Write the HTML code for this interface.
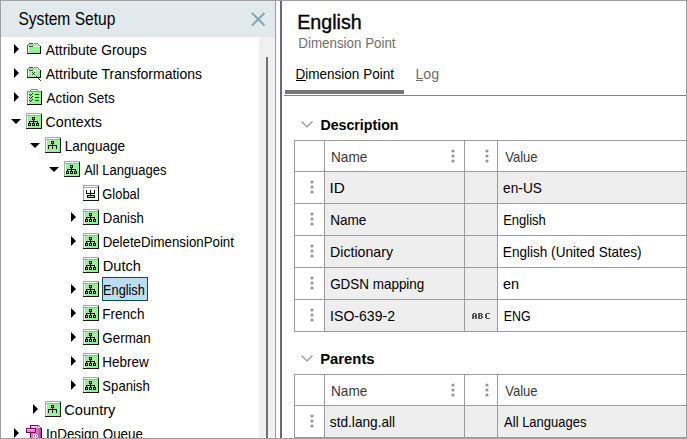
<!DOCTYPE html>
<html><head><meta charset="utf-8">
<style>
html,body{margin:0;padding:0;width:687px;height:439px;overflow:hidden;background:#fff;}
body{position:relative;font-family:"Liberation Sans",sans-serif;color:#000;}
.ab{position:absolute;display:block;}
.gl{background:#9c9c9c;}
</style></head><body>
<div class="ab" style="left:1px;top:1px;width:274px;height:36px;background:#e1e9ec"></div>
<svg class="ab" style="left:250px;top:11px" width="16" height="16"><path d="M2 2L14.5 14.5M14.5 2L2 14.5" stroke="#7ea8b2" stroke-width="2"/></svg>
<div class="ab" style="left:259px;top:37px;width:16px;height:402px;background:#f0f0f0"></div>
<div class="ab" style="left:266px;top:57px;width:2px;height:382px;background:#707070"></div>
<div class="ab" style="left:275px;top:0px;width:1px;height:439px;background:#7ea8b2"></div>
<div class="ab" style="left:280px;top:0px;width:2px;height:439px;background:#6a6a6a"></div>
<svg class="ab" style="left:14px;top:44px" width="5" height="10"><path d="M0 0L5 5L0 10Z" fill="#000"/></svg>
<svg class="ab" style="left:26px;top:41px" width="16" height="16" shape-rendering="crispEdges"><rect x="3" y="2" width="4" height="1" fill="#505050"/><rect x="8" y="2" width="4" height="1" fill="#8a8a8a"/><rect x="2" y="3" width="1" height="1" fill="#707070"/><rect x="3" y="3" width="4" height="2" fill="#90e890"/><rect x="7" y="3" width="1" height="1" fill="#909090"/><rect x="8" y="3" width="4" height="1" fill="#c0f8c0"/><rect x="12" y="3" width="1" height="1" fill="#909090"/><rect x="1" y="4" width="1" height="1" fill="#707070"/><rect x="2" y="4" width="1" height="1" fill="#a0c8a0"/><rect x="7" y="4" width="6" height="1" fill="#b8d8b8"/><rect x="13" y="4" width="1" height="1" fill="#909090"/><rect x="1" y="5" width="1" height="8" fill="#606060"/><rect x="2" y="5" width="1" height="7" fill="#d8ffd8"/><rect x="3" y="5" width="4" height="1" fill="#505050"/><rect x="7" y="5" width="7" height="1" fill="#d0ffd0"/><rect x="14" y="5" width="1" height="8" fill="#111"/><rect x="3" y="6" width="11" height="6" fill="#98f098"/><rect x="1" y="12" width="14" height="1" fill="#111"/></svg>
<svg class="ab" style="left:14px;top:68px" width="5" height="10"><path d="M0 0L5 5L0 10Z" fill="#000"/></svg>
<svg class="ab" style="left:26px;top:65px" width="16" height="16" shape-rendering="crispEdges"><rect x="3" y="2" width="4" height="1" fill="#505050"/><rect x="8" y="2" width="4" height="1" fill="#8a8a8a"/><rect x="2" y="3" width="1" height="1" fill="#707070"/><rect x="3" y="3" width="4" height="2" fill="#90e890"/><rect x="7" y="3" width="1" height="1" fill="#909090"/><rect x="8" y="3" width="4" height="1" fill="#c0f8c0"/><rect x="12" y="3" width="1" height="1" fill="#909090"/><rect x="1" y="4" width="1" height="1" fill="#707070"/><rect x="2" y="4" width="1" height="1" fill="#a0c8a0"/><rect x="7" y="4" width="6" height="1" fill="#b8d8b8"/><rect x="13" y="4" width="1" height="1" fill="#909090"/><rect x="1" y="5" width="1" height="8" fill="#606060"/><rect x="2" y="5" width="1" height="7" fill="#d8ffd8"/><rect x="3" y="5" width="4" height="1" fill="#505050"/><rect x="7" y="5" width="7" height="1" fill="#d0ffd0"/><rect x="14" y="5" width="1" height="8" fill="#111"/><rect x="3" y="6" width="11" height="6" fill="#98f098"/><rect x="1" y="12" width="14" height="1" fill="#111"/><rect x="7" y="8" width="1" height="1" fill="#111"/><rect x="6" y="7" width="1" height="1" fill="#555"/><rect x="8" y="7" width="1" height="1" fill="#555"/><rect x="6" y="9" width="1" height="1" fill="#555"/><rect x="8" y="9" width="1" height="1" fill="#555"/><rect x="5" y="6" width="1" height="1" fill="#f0f0f0"/><rect x="9" y="6" width="1" height="1" fill="#f0f0f0"/><rect x="7" y="6" width="1" height="1" fill="#d0d0d0"/><rect x="4" y="8" width="2" height="1" fill="#f0f0f0"/><rect x="9" y="8" width="2" height="1" fill="#f0f0f0"/><rect x="5" y="10" width="1" height="1" fill="#f0f0f0"/><rect x="9" y="10" width="1" height="1" fill="#d0d0d0"/><rect x="7" y="10" width="1" height="1" fill="#d0d0d0"/><rect x="10" y="11" width="1" height="1" fill="#222"/><rect x="11" y="12" width="1" height="1" fill="#222"/><rect x="12" y="13" width="1" height="1" fill="#222"/><rect x="13" y="14" width="1" height="1" fill="#222"/><rect x="14" y="15" width="1" height="1" fill="#444"/></svg>
<svg class="ab" style="left:14px;top:92px" width="5" height="10"><path d="M0 0L5 5L0 10Z" fill="#000"/></svg>
<svg class="ab" style="left:26px;top:89px" width="16" height="16" shape-rendering="crispEdges"><rect x="1" y="2" width="15" height="14" fill="#909090"/><rect x="2" y="3" width="13" height="12" fill="#98f098"/><rect x="2" y="3" width="1" height="12" fill="#f4fff4"/><rect x="15" y="2" width="1" height="14" fill="#111"/><rect x="1" y="15" width="15" height="1" fill="#111"/><rect x="4" y="0" width="8" height="3" fill="#8a8a8a"/><rect x="5" y="1" width="6" height="1" fill="#fff"/><rect x="4" y="0" width="1" height="1" fill="#c8c8c8"/><rect x="11" y="0" width="1" height="1" fill="#c8c8c8"/><rect x="3" y="5" width="1" height="1" fill="#0a2a0a"/><rect x="4" y="6" width="1" height="1" fill="#0a2a0a"/><rect x="5" y="5" width="1" height="1" fill="#0a2a0a"/><rect x="6" y="4" width="1" height="1" fill="#0a2a0a"/><rect x="9" y="5" width="4" height="1" fill="#0a6a0a"/><rect x="3" y="8" width="1" height="1" fill="#0a2a0a"/><rect x="4" y="9" width="1" height="1" fill="#0a2a0a"/><rect x="5" y="8" width="1" height="1" fill="#0a2a0a"/><rect x="6" y="7" width="1" height="1" fill="#0a2a0a"/><rect x="9" y="8" width="4" height="1" fill="#0a6a0a"/><rect x="3" y="11" width="1" height="1" fill="#0a2a0a"/><rect x="4" y="12" width="1" height="1" fill="#0a2a0a"/><rect x="5" y="11" width="1" height="1" fill="#0a2a0a"/><rect x="6" y="10" width="1" height="1" fill="#0a2a0a"/><rect x="9" y="11" width="4" height="1" fill="#0a6a0a"/></svg>
<svg class="ab" style="left:11px;top:119px" width="10" height="5"><path d="M0 0L10 0L5 5Z" fill="#000"/></svg>
<svg class="ab" style="left:26px;top:113px" width="16" height="16" shape-rendering="crispEdges"><rect x="0" y="0" width="16" height="16" fill="#a8a8a8"/><rect x="1" y="1" width="14" height="1" fill="#fff"/><rect x="1" y="3" width="14" height="12" fill="#98f098"/><rect x="15" y="1" width="1" height="15" fill="#1a1a1a"/><rect x="0" y="15" width="16" height="1" fill="#1a1a1a"/><rect x="1" y="3" width="1" height="12" fill="#e8ffe8"/><rect x="6" y="4" width="3" height="3" fill="#111"/><rect x="7" y="5" width="1" height="1" fill="#ddd"/><rect x="7" y="7" width="1" height="1" fill="#111"/><rect x="3" y="8" width="9" height="1" fill="#111"/><rect x="3" y="9" width="1" height="1" fill="#111"/><rect x="7" y="9" width="1" height="1" fill="#111"/><rect x="11" y="9" width="1" height="1" fill="#111"/><rect x="2" y="10" width="3" height="3" fill="#111"/><rect x="3" y="11" width="1" height="1" fill="#ddd"/><rect x="6" y="10" width="3" height="3" fill="#111"/><rect x="7" y="11" width="1" height="1" fill="#ddd"/><rect x="10" y="10" width="3" height="3" fill="#111"/><rect x="11" y="11" width="1" height="1" fill="#ddd"/></svg>
<svg class="ab" style="left:30px;top:143px" width="10" height="5"><path d="M0 0L10 0L5 5Z" fill="#000"/></svg>
<svg class="ab" style="left:45px;top:137px" width="16" height="16" shape-rendering="crispEdges"><rect x="0" y="0" width="16" height="16" fill="#a8a8a8"/><rect x="1" y="1" width="14" height="1" fill="#fff"/><rect x="1" y="3" width="14" height="12" fill="#98f098"/><rect x="15" y="1" width="1" height="15" fill="#1a1a1a"/><rect x="0" y="15" width="16" height="1" fill="#1a1a1a"/><rect x="1" y="3" width="1" height="12" fill="#e8ffe8"/><rect x="6" y="4" width="3" height="3" fill="#111"/><rect x="7" y="5" width="1" height="1" fill="#ddd"/><rect x="7" y="7" width="1" height="1" fill="#111"/><rect x="3" y="8" width="9" height="1" fill="#111"/><rect x="3" y="9" width="1" height="3" fill="#111"/><rect x="7" y="9" width="1" height="3" fill="#111"/><rect x="11" y="9" width="1" height="3" fill="#111"/></svg>
<svg class="ab" style="left:49px;top:167px" width="10" height="5"><path d="M0 0L10 0L5 5Z" fill="#000"/></svg>
<svg class="ab" style="left:64px;top:161px" width="16" height="16" shape-rendering="crispEdges"><rect x="0" y="0" width="16" height="16" fill="#a8a8a8"/><rect x="1" y="1" width="14" height="1" fill="#fff"/><rect x="1" y="3" width="14" height="12" fill="#98f098"/><rect x="15" y="1" width="1" height="15" fill="#1a1a1a"/><rect x="0" y="15" width="16" height="1" fill="#1a1a1a"/><rect x="1" y="3" width="1" height="12" fill="#e8ffe8"/><rect x="6" y="4" width="3" height="3" fill="#111"/><rect x="7" y="5" width="1" height="1" fill="#ddd"/><rect x="7" y="7" width="1" height="1" fill="#111"/><rect x="3" y="8" width="9" height="1" fill="#111"/><rect x="3" y="9" width="1" height="1" fill="#111"/><rect x="7" y="9" width="1" height="1" fill="#111"/><rect x="11" y="9" width="1" height="1" fill="#111"/><rect x="2" y="10" width="3" height="3" fill="#111"/><rect x="3" y="11" width="1" height="1" fill="#ddd"/><rect x="6" y="10" width="3" height="3" fill="#111"/><rect x="7" y="11" width="1" height="1" fill="#ddd"/><rect x="10" y="10" width="3" height="3" fill="#111"/><rect x="11" y="11" width="1" height="1" fill="#ddd"/></svg>
<svg class="ab" style="left:83px;top:185px" width="16" height="16" shape-rendering="crispEdges"><rect x="0" y="0" width="16" height="16" fill="#a8a8a8"/><rect x="1" y="1" width="14" height="1" fill="#fff"/><rect x="1" y="3" width="14" height="12" fill="#fff"/><rect x="15" y="1" width="1" height="15" fill="#1a1a1a"/><rect x="0" y="15" width="16" height="1" fill="#1a1a1a"/><rect x="3" y="5" width="1" height="3" fill="#111"/><rect x="7" y="5" width="1" height="3" fill="#111"/><rect x="11" y="5" width="1" height="3" fill="#111"/><rect x="3" y="8" width="9" height="1" fill="#111"/><rect x="7" y="9" width="1" height="1" fill="#111"/><rect x="4" y="10" width="8" height="3" fill="#111"/><rect x="5" y="11" width="6" height="1" fill="#7ee87e"/></svg>
<svg class="ab" style="left:71px;top:212px" width="5" height="10"><path d="M0 0L5 5L0 10Z" fill="#000"/></svg>
<svg class="ab" style="left:83px;top:209px" width="16" height="16" shape-rendering="crispEdges"><rect x="0" y="0" width="16" height="16" fill="#a8a8a8"/><rect x="1" y="1" width="14" height="1" fill="#fff"/><rect x="1" y="3" width="14" height="12" fill="#98f098"/><rect x="15" y="1" width="1" height="15" fill="#1a1a1a"/><rect x="0" y="15" width="16" height="1" fill="#1a1a1a"/><rect x="1" y="3" width="1" height="12" fill="#e8ffe8"/><rect x="6" y="4" width="3" height="3" fill="#111"/><rect x="7" y="5" width="1" height="1" fill="#ddd"/><rect x="7" y="7" width="1" height="1" fill="#111"/><rect x="3" y="8" width="9" height="1" fill="#111"/><rect x="3" y="9" width="1" height="1" fill="#111"/><rect x="7" y="9" width="1" height="1" fill="#111"/><rect x="11" y="9" width="1" height="1" fill="#111"/><rect x="2" y="10" width="3" height="3" fill="#111"/><rect x="3" y="11" width="1" height="1" fill="#ddd"/><rect x="6" y="10" width="3" height="3" fill="#111"/><rect x="7" y="11" width="1" height="1" fill="#ddd"/><rect x="10" y="10" width="3" height="3" fill="#111"/><rect x="11" y="11" width="1" height="1" fill="#ddd"/></svg>
<svg class="ab" style="left:71px;top:236px" width="5" height="10"><path d="M0 0L5 5L0 10Z" fill="#000"/></svg>
<svg class="ab" style="left:83px;top:233px" width="16" height="16" shape-rendering="crispEdges"><rect x="0" y="0" width="16" height="16" fill="#a8a8a8"/><rect x="1" y="1" width="14" height="1" fill="#fff"/><rect x="1" y="3" width="14" height="12" fill="#98f098"/><rect x="15" y="1" width="1" height="15" fill="#1a1a1a"/><rect x="0" y="15" width="16" height="1" fill="#1a1a1a"/><rect x="1" y="3" width="1" height="12" fill="#e8ffe8"/><rect x="6" y="4" width="3" height="3" fill="#111"/><rect x="7" y="5" width="1" height="1" fill="#ddd"/><rect x="7" y="7" width="1" height="1" fill="#111"/><rect x="3" y="8" width="9" height="1" fill="#111"/><rect x="3" y="9" width="1" height="1" fill="#111"/><rect x="7" y="9" width="1" height="1" fill="#111"/><rect x="11" y="9" width="1" height="1" fill="#111"/><rect x="2" y="10" width="3" height="3" fill="#111"/><rect x="3" y="11" width="1" height="1" fill="#ddd"/><rect x="6" y="10" width="3" height="3" fill="#111"/><rect x="7" y="11" width="1" height="1" fill="#ddd"/><rect x="10" y="10" width="3" height="3" fill="#111"/><rect x="11" y="11" width="1" height="1" fill="#ddd"/></svg>
<svg class="ab" style="left:83px;top:257px" width="16" height="16" shape-rendering="crispEdges"><rect x="0" y="0" width="16" height="16" fill="#a8a8a8"/><rect x="1" y="1" width="14" height="1" fill="#fff"/><rect x="1" y="3" width="14" height="12" fill="#98f098"/><rect x="15" y="1" width="1" height="15" fill="#1a1a1a"/><rect x="0" y="15" width="16" height="1" fill="#1a1a1a"/><rect x="1" y="3" width="1" height="12" fill="#e8ffe8"/><rect x="6" y="4" width="3" height="3" fill="#111"/><rect x="7" y="5" width="1" height="1" fill="#ddd"/><rect x="7" y="7" width="1" height="1" fill="#111"/><rect x="3" y="8" width="9" height="1" fill="#111"/><rect x="3" y="9" width="1" height="1" fill="#111"/><rect x="7" y="9" width="1" height="1" fill="#111"/><rect x="11" y="9" width="1" height="1" fill="#111"/><rect x="2" y="10" width="3" height="3" fill="#111"/><rect x="3" y="11" width="1" height="1" fill="#ddd"/><rect x="6" y="10" width="3" height="3" fill="#111"/><rect x="7" y="11" width="1" height="1" fill="#ddd"/><rect x="10" y="10" width="3" height="3" fill="#111"/><rect x="11" y="11" width="1" height="1" fill="#ddd"/></svg>
<svg class="ab" style="left:71px;top:284px" width="5" height="10"><path d="M0 0L5 5L0 10Z" fill="#000"/></svg>
<svg class="ab" style="left:83px;top:281px" width="16" height="16" shape-rendering="crispEdges"><rect x="0" y="0" width="16" height="16" fill="#a8a8a8"/><rect x="1" y="1" width="14" height="1" fill="#fff"/><rect x="1" y="3" width="14" height="12" fill="#98f098"/><rect x="15" y="1" width="1" height="15" fill="#1a1a1a"/><rect x="0" y="15" width="16" height="1" fill="#1a1a1a"/><rect x="1" y="3" width="1" height="12" fill="#e8ffe8"/><rect x="6" y="4" width="3" height="3" fill="#111"/><rect x="7" y="5" width="1" height="1" fill="#ddd"/><rect x="7" y="7" width="1" height="1" fill="#111"/><rect x="3" y="8" width="9" height="1" fill="#111"/><rect x="3" y="9" width="1" height="1" fill="#111"/><rect x="7" y="9" width="1" height="1" fill="#111"/><rect x="11" y="9" width="1" height="1" fill="#111"/><rect x="2" y="10" width="3" height="3" fill="#111"/><rect x="3" y="11" width="1" height="1" fill="#ddd"/><rect x="6" y="10" width="3" height="3" fill="#111"/><rect x="7" y="11" width="1" height="1" fill="#ddd"/><rect x="10" y="10" width="3" height="3" fill="#111"/><rect x="11" y="11" width="1" height="1" fill="#ddd"/></svg>
<svg class="ab" style="left:102px;top:277px" width="46" height="24" shape-rendering="crispEdges"><rect x="0" y="0" width="46" height="24" fill="#bcdcf0"/><rect x="0.5" y="0.5" width="45" height="23" fill="none" stroke="#1e5a6a" stroke-width="1"/><rect x="0.5" y="0.5" width="45" height="23" fill="none" stroke="#4a1e0e" stroke-width="1" stroke-dasharray="1 1"/></svg>
<svg class="ab" style="left:71px;top:308px" width="5" height="10"><path d="M0 0L5 5L0 10Z" fill="#000"/></svg>
<svg class="ab" style="left:83px;top:305px" width="16" height="16" shape-rendering="crispEdges"><rect x="0" y="0" width="16" height="16" fill="#a8a8a8"/><rect x="1" y="1" width="14" height="1" fill="#fff"/><rect x="1" y="3" width="14" height="12" fill="#98f098"/><rect x="15" y="1" width="1" height="15" fill="#1a1a1a"/><rect x="0" y="15" width="16" height="1" fill="#1a1a1a"/><rect x="1" y="3" width="1" height="12" fill="#e8ffe8"/><rect x="6" y="4" width="3" height="3" fill="#111"/><rect x="7" y="5" width="1" height="1" fill="#ddd"/><rect x="7" y="7" width="1" height="1" fill="#111"/><rect x="3" y="8" width="9" height="1" fill="#111"/><rect x="3" y="9" width="1" height="1" fill="#111"/><rect x="7" y="9" width="1" height="1" fill="#111"/><rect x="11" y="9" width="1" height="1" fill="#111"/><rect x="2" y="10" width="3" height="3" fill="#111"/><rect x="3" y="11" width="1" height="1" fill="#ddd"/><rect x="6" y="10" width="3" height="3" fill="#111"/><rect x="7" y="11" width="1" height="1" fill="#ddd"/><rect x="10" y="10" width="3" height="3" fill="#111"/><rect x="11" y="11" width="1" height="1" fill="#ddd"/></svg>
<svg class="ab" style="left:71px;top:332px" width="5" height="10"><path d="M0 0L5 5L0 10Z" fill="#000"/></svg>
<svg class="ab" style="left:83px;top:329px" width="16" height="16" shape-rendering="crispEdges"><rect x="0" y="0" width="16" height="16" fill="#a8a8a8"/><rect x="1" y="1" width="14" height="1" fill="#fff"/><rect x="1" y="3" width="14" height="12" fill="#98f098"/><rect x="15" y="1" width="1" height="15" fill="#1a1a1a"/><rect x="0" y="15" width="16" height="1" fill="#1a1a1a"/><rect x="1" y="3" width="1" height="12" fill="#e8ffe8"/><rect x="6" y="4" width="3" height="3" fill="#111"/><rect x="7" y="5" width="1" height="1" fill="#ddd"/><rect x="7" y="7" width="1" height="1" fill="#111"/><rect x="3" y="8" width="9" height="1" fill="#111"/><rect x="3" y="9" width="1" height="1" fill="#111"/><rect x="7" y="9" width="1" height="1" fill="#111"/><rect x="11" y="9" width="1" height="1" fill="#111"/><rect x="2" y="10" width="3" height="3" fill="#111"/><rect x="3" y="11" width="1" height="1" fill="#ddd"/><rect x="6" y="10" width="3" height="3" fill="#111"/><rect x="7" y="11" width="1" height="1" fill="#ddd"/><rect x="10" y="10" width="3" height="3" fill="#111"/><rect x="11" y="11" width="1" height="1" fill="#ddd"/></svg>
<svg class="ab" style="left:71px;top:356px" width="5" height="10"><path d="M0 0L5 5L0 10Z" fill="#000"/></svg>
<svg class="ab" style="left:83px;top:353px" width="16" height="16" shape-rendering="crispEdges"><rect x="0" y="0" width="16" height="16" fill="#a8a8a8"/><rect x="1" y="1" width="14" height="1" fill="#fff"/><rect x="1" y="3" width="14" height="12" fill="#98f098"/><rect x="15" y="1" width="1" height="15" fill="#1a1a1a"/><rect x="0" y="15" width="16" height="1" fill="#1a1a1a"/><rect x="1" y="3" width="1" height="12" fill="#e8ffe8"/><rect x="6" y="4" width="3" height="3" fill="#111"/><rect x="7" y="5" width="1" height="1" fill="#ddd"/><rect x="7" y="7" width="1" height="1" fill="#111"/><rect x="3" y="8" width="9" height="1" fill="#111"/><rect x="3" y="9" width="1" height="1" fill="#111"/><rect x="7" y="9" width="1" height="1" fill="#111"/><rect x="11" y="9" width="1" height="1" fill="#111"/><rect x="2" y="10" width="3" height="3" fill="#111"/><rect x="3" y="11" width="1" height="1" fill="#ddd"/><rect x="6" y="10" width="3" height="3" fill="#111"/><rect x="7" y="11" width="1" height="1" fill="#ddd"/><rect x="10" y="10" width="3" height="3" fill="#111"/><rect x="11" y="11" width="1" height="1" fill="#ddd"/></svg>
<svg class="ab" style="left:71px;top:380px" width="5" height="10"><path d="M0 0L5 5L0 10Z" fill="#000"/></svg>
<svg class="ab" style="left:83px;top:377px" width="16" height="16" shape-rendering="crispEdges"><rect x="0" y="0" width="16" height="16" fill="#a8a8a8"/><rect x="1" y="1" width="14" height="1" fill="#fff"/><rect x="1" y="3" width="14" height="12" fill="#98f098"/><rect x="15" y="1" width="1" height="15" fill="#1a1a1a"/><rect x="0" y="15" width="16" height="1" fill="#1a1a1a"/><rect x="1" y="3" width="1" height="12" fill="#e8ffe8"/><rect x="6" y="4" width="3" height="3" fill="#111"/><rect x="7" y="5" width="1" height="1" fill="#ddd"/><rect x="7" y="7" width="1" height="1" fill="#111"/><rect x="3" y="8" width="9" height="1" fill="#111"/><rect x="3" y="9" width="1" height="1" fill="#111"/><rect x="7" y="9" width="1" height="1" fill="#111"/><rect x="11" y="9" width="1" height="1" fill="#111"/><rect x="2" y="10" width="3" height="3" fill="#111"/><rect x="3" y="11" width="1" height="1" fill="#ddd"/><rect x="6" y="10" width="3" height="3" fill="#111"/><rect x="7" y="11" width="1" height="1" fill="#ddd"/><rect x="10" y="10" width="3" height="3" fill="#111"/><rect x="11" y="11" width="1" height="1" fill="#ddd"/></svg>
<svg class="ab" style="left:33px;top:404px" width="5" height="10"><path d="M0 0L5 5L0 10Z" fill="#000"/></svg>
<svg class="ab" style="left:45px;top:401px" width="16" height="16" shape-rendering="crispEdges"><rect x="0" y="0" width="16" height="16" fill="#a8a8a8"/><rect x="1" y="1" width="14" height="1" fill="#fff"/><rect x="1" y="3" width="14" height="12" fill="#98f098"/><rect x="15" y="1" width="1" height="15" fill="#1a1a1a"/><rect x="0" y="15" width="16" height="1" fill="#1a1a1a"/><rect x="1" y="3" width="1" height="12" fill="#e8ffe8"/><rect x="6" y="4" width="3" height="3" fill="#111"/><rect x="7" y="5" width="1" height="1" fill="#ddd"/><rect x="7" y="7" width="1" height="1" fill="#111"/><rect x="3" y="8" width="9" height="1" fill="#111"/><rect x="3" y="9" width="1" height="3" fill="#111"/><rect x="7" y="9" width="1" height="3" fill="#111"/><rect x="11" y="9" width="1" height="3" fill="#111"/></svg>
<svg class="ab" style="left:14px;top:428px" width="5" height="10"><path d="M0 0L5 5L0 10Z" fill="#000"/></svg>
<svg class="ab" style="left:26px;top:425px" width="16" height="16" shape-rendering="crispEdges"><rect x="4" y="0" width="8" height="1" fill="#7a0a58"/><rect x="12" y="0" width="1" height="1" fill="#9a3a80"/><rect x="13" y="1" width="1" height="1" fill="#9a3a80"/><rect x="14" y="2" width="1" height="1" fill="#9a3a80"/><rect x="4" y="1" width="1" height="13" fill="#7a0a58"/><rect x="5" y="1" width="7" height="13" fill="#e070c8"/><rect x="12" y="2" width="2" height="12" fill="#d050b8"/><rect x="12" y="1" width="1" height="1" fill="#fff"/><rect x="12" y="2" width="2" height="1" fill="#fff"/><rect x="5" y="1" width="6" height="2" fill="#f8c0ec"/><rect x="15" y="3" width="1" height="11" fill="#111"/><rect x="14" y="3" width="1" height="11" fill="#c040a8"/><rect x="0" y="3" width="10" height="5" fill="#7a0a58"/><rect x="1" y="4" width="8" height="3" fill="#e880d0"/><rect x="1" y="4" width="8" height="1" fill="#fbd0f0"/><rect x="7" y="9" width="1" height="4" fill="#fff"/><rect x="9" y="9" width="1" height="4" fill="#fff"/><rect x="10" y="9" width="1" height="1" fill="#fff"/><rect x="11" y="10" width="1" height="2" fill="#fff"/><rect x="10" y="12" width="1" height="1" fill="#fff"/></svg>
<div class="ab" style="left:285px;top:90px;width:119px;height:4px;background:#777"></div>
<div class="ab" style="left:284px;top:95px;width:403px;height:1px;background:#808080"></div>
<div class="ab" style="left:296px;top:80px;width:10px;height:1px;background:#000"></div>
<div class="ab" style="left:416px;top:80px;width:7px;height:1px;background:#6e6e6e"></div>
<svg class="ab" style="left:300px;top:119px" width="14" height="10"><path d="M1.5 2.5L7 8L12.5 2.5" stroke="#959595" stroke-width="1.2" fill="none"/></svg>
<div class="ab" style="left:325px;top:172px;width:172px;height:31px;background:#eeeeee"></div>
<div class="ab" style="left:498px;top:172px;width:188px;height:31px;background:#eeeeee"></div>
<div class="ab" style="left:325px;top:204px;width:172px;height:31px;background:#eeeeee"></div>
<div class="ab" style="left:325px;top:236px;width:172px;height:31px;background:#eeeeee"></div>
<div class="ab" style="left:325px;top:268px;width:172px;height:31px;background:#eeeeee"></div>
<div class="ab" style="left:325px;top:300px;width:172px;height:31px;background:#eeeeee"></div>
<div class="ab gl" style="left:294px;top:140px;width:392px;height:1px"></div>
<div class="ab gl" style="left:294px;top:171px;width:392px;height:1px"></div>
<div class="ab gl" style="left:294px;top:203px;width:392px;height:1px"></div>
<div class="ab gl" style="left:294px;top:235px;width:392px;height:1px"></div>
<div class="ab gl" style="left:294px;top:267px;width:392px;height:1px"></div>
<div class="ab gl" style="left:294px;top:299px;width:392px;height:1px"></div>
<div class="ab gl" style="left:294px;top:331px;width:392px;height:1px"></div>
<div class="ab gl" style="left:294px;top:140px;width:1px;height:192px"></div>
<div class="ab gl" style="left:324px;top:140px;width:1px;height:192px"></div>
<div class="ab gl" style="left:464px;top:140px;width:1px;height:192px"></div>
<div class="ab gl" style="left:497px;top:140px;width:1px;height:192px"></div>
<svg class="ab" style="left:451px;top:149px" width="4" height="14"><circle cx="2" cy="2" r="1.6" fill="#959595"/><circle cx="2" cy="7" r="1.6" fill="#959595"/><circle cx="2" cy="12" r="1.6" fill="#959595"/></svg>
<svg class="ab" style="left:485px;top:149px" width="4" height="14"><circle cx="2" cy="2" r="1.6" fill="#959595"/><circle cx="2" cy="7" r="1.6" fill="#959595"/><circle cx="2" cy="12" r="1.6" fill="#959595"/></svg>
<svg class="ab" style="left:310px;top:180px" width="4" height="14"><circle cx="2" cy="2" r="1.6" fill="#959595"/><circle cx="2" cy="7" r="1.6" fill="#959595"/><circle cx="2" cy="12" r="1.6" fill="#959595"/></svg>
<svg class="ab" style="left:310px;top:212px" width="4" height="14"><circle cx="2" cy="2" r="1.6" fill="#959595"/><circle cx="2" cy="7" r="1.6" fill="#959595"/><circle cx="2" cy="12" r="1.6" fill="#959595"/></svg>
<svg class="ab" style="left:310px;top:244px" width="4" height="14"><circle cx="2" cy="2" r="1.6" fill="#959595"/><circle cx="2" cy="7" r="1.6" fill="#959595"/><circle cx="2" cy="12" r="1.6" fill="#959595"/></svg>
<svg class="ab" style="left:310px;top:276px" width="4" height="14"><circle cx="2" cy="2" r="1.6" fill="#959595"/><circle cx="2" cy="7" r="1.6" fill="#959595"/><circle cx="2" cy="12" r="1.6" fill="#959595"/></svg>
<svg class="ab" style="left:310px;top:308px" width="4" height="14"><circle cx="2" cy="2" r="1.6" fill="#959595"/><circle cx="2" cy="7" r="1.6" fill="#959595"/><circle cx="2" cy="12" r="1.6" fill="#959595"/></svg>
<svg class="ab" style="left:472px;top:313px" width="19" height="6" shape-rendering="crispEdges" fill="#585858"><path d="M1 0h3v1h-3zM0 1h2v1h-2zM3 1h2v1h-2zM0 2h2v1h-2zM3 2h2v1h-2zM0 3h5v1h-5zM0 4h2v1h-2zM3 4h2v1h-2zM0 5h2v1h-2zM3 5h2v1h-2zM6 0h4v1h-4zM6 1h2v1h-2zM9 1h2v1h-2zM6 2h4v1h-4zM6 3h2v1h-2zM9 3h2v1h-2zM6 4h2v1h-2zM9 4h2v1h-2zM6 5h4v1h-4zM14 0h4v1h-4zM13 1h2v1h-2zM13 2h2v1h-2zM13 3h2v1h-2zM13 4h2v1h-2zM14 5h4v1h-4z"/></svg>
<svg class="ab" style="left:300px;top:353px" width="14" height="10"><path d="M1.5 2.5L7 8L12.5 2.5" stroke="#959595" stroke-width="1.2" fill="none"/></svg>
<div class="ab" style="left:325px;top:406px;width:172px;height:31px;background:#eeeeee"></div>
<div class="ab" style="left:498px;top:406px;width:188px;height:31px;background:#eeeeee"></div>
<div class="ab gl" style="left:294px;top:374px;width:392px;height:1px"></div>
<div class="ab gl" style="left:294px;top:405px;width:392px;height:1px"></div>
<div class="ab gl" style="left:294px;top:437px;width:392px;height:1px"></div>
<div class="ab gl" style="left:294px;top:374px;width:1px;height:64px"></div>
<div class="ab gl" style="left:324px;top:374px;width:1px;height:64px"></div>
<div class="ab gl" style="left:464px;top:374px;width:1px;height:64px"></div>
<div class="ab gl" style="left:497px;top:374px;width:1px;height:64px"></div>
<svg class="ab" style="left:451px;top:383px" width="4" height="14"><circle cx="2" cy="2" r="1.6" fill="#959595"/><circle cx="2" cy="7" r="1.6" fill="#959595"/><circle cx="2" cy="12" r="1.6" fill="#959595"/></svg>
<svg class="ab" style="left:485px;top:383px" width="4" height="14"><circle cx="2" cy="2" r="1.6" fill="#959595"/><circle cx="2" cy="7" r="1.6" fill="#959595"/><circle cx="2" cy="12" r="1.6" fill="#959595"/></svg>
<svg class="ab" style="left:310px;top:414px" width="4" height="14"><circle cx="2" cy="2" r="1.6" fill="#959595"/><circle cx="2" cy="7" r="1.6" fill="#959595"/><circle cx="2" cy="12" r="1.6" fill="#959595"/></svg>
<svg class="ab" style="left:0;top:0" width="687" height="439" font-family="Liberation Sans"><text transform="translate(45.70,55) scale(0.9902,1)" font-size="14" font-weight="400" fill="#000">Attribute Groups</text><text transform="translate(45.80,79) scale(0.9987,1)" font-size="14" font-weight="400" fill="#000">Attribute Transformations</text><text transform="translate(46.50,103) scale(0.9643,1)" font-size="14" font-weight="400" fill="#000">Action Sets</text><text transform="translate(45.48,127) scale(1.0222,1)" font-size="14" font-weight="400" fill="#000">Contexts</text><text transform="translate(64.63,151) scale(0.9738,1)" font-size="14" font-weight="400" fill="#000">Language</text><text transform="translate(84.20,175) scale(0.9273,1)" font-size="14" font-weight="400" fill="#000">All Languages</text><text transform="translate(102.28,199) scale(0.9231,1)" font-size="14" font-weight="400" fill="#000">Global</text><text transform="translate(102.86,223) scale(0.9429,1)" font-size="14" font-weight="400" fill="#000">Danish</text><text transform="translate(102.65,247) scale(0.9493,1)" font-size="14" font-weight="400" fill="#000">DeleteDimensionPoint</text><text transform="translate(102.75,271) scale(1.0457,1)" font-size="14" font-weight="400" fill="#000">Dutch</text><text transform="translate(103.09,295) scale(0.9091,1)" font-size="14" font-weight="400" fill="#000">English</text><text transform="translate(102.33,319) scale(0.9667,1)" font-size="14" font-weight="400" fill="#000">French</text><text transform="translate(102.34,343) scale(0.9571,1)" font-size="14" font-weight="400" fill="#000">German</text><text transform="translate(102.34,367) scale(0.9638,1)" font-size="14" font-weight="400" fill="#000">Hebrew</text><text transform="translate(102.36,391) scale(0.9367,1)" font-size="14" font-weight="400" fill="#000">Spanish</text><text transform="translate(64.26,415) scale(1.0437,1)" font-size="14" font-weight="400" fill="#000">Country</text><text transform="translate(46.04,439) scale(0.9590,1)" font-size="14" font-weight="400" fill="#000">InDesign Queue</text><text transform="translate(18.41,25) scale(0.8907,1)" font-size="17.5" font-weight="400" fill="#000">System Setup</text><text transform="translate(297.18,29) scale(0.9594,1)" font-size="20.5" font-weight="400" fill="#000" stroke="#000" stroke-width="0.35">English</text><text transform="translate(298.35,48) scale(0.9545,1)" font-size="14" font-weight="400" fill="#6e6e6e">Dimension Point</text><text transform="translate(295.43,79) scale(0.9673,1)" font-size="14" font-weight="400" fill="#000">Dimension Point</text><text transform="translate(415.39,79) scale(1.0136,1)" font-size="14" font-weight="400" fill="#6e6e6e">Log</text><text transform="translate(320.39,130) scale(1.0147,1)" font-size="14" font-weight="bold" fill="#000">Description</text><text transform="translate(320.24,364) scale(1.0580,1)" font-size="14" font-weight="bold" fill="#000">Parents</text><text transform="translate(331.03,162) scale(0.9722,1)" font-size="14" font-weight="400" fill="#383838">Name</text><text transform="translate(505.20,162) scale(0.9324,1)" font-size="14" font-weight="400" fill="#383838">Value</text><text transform="translate(329.41,193) scale(1.0923,1)" font-size="14" font-weight="400" fill="#000">ID</text><text transform="translate(330.13,225) scale(0.9722,1)" font-size="14" font-weight="400" fill="#000">Name</text><text transform="translate(330.09,257) scale(1.0115,1)" font-size="14" font-weight="400" fill="#000">Dictionary</text><text transform="translate(330.14,289) scale(0.9615,1)" font-size="14" font-weight="400" fill="#000">GDSN mapping</text><text transform="translate(330.09,321) scale(1.0063,1)" font-size="14" font-weight="400" fill="#000">ISO-639-2</text><text transform="translate(503.12,193) scale(0.9789,1)" font-size="14" font-weight="400" fill="#000">en-US</text><text transform="translate(503.17,225) scale(0.9295,1)" font-size="14" font-weight="400" fill="#000">English</text><text transform="translate(502.83,257) scale(0.9702,1)" font-size="14" font-weight="400" fill="#000">English (United States)</text><text transform="translate(503.06,289) scale(1.0357,1)" font-size="14" font-weight="400" fill="#000">en</text><text transform="translate(503.71,321) scale(0.8862,1)" font-size="14" font-weight="400" fill="#000">ENG</text><text transform="translate(331.03,396) scale(0.9722,1)" font-size="14" font-weight="400" fill="#383838">Name</text><text transform="translate(505.20,396) scale(0.9324,1)" font-size="14" font-weight="400" fill="#383838">Value</text><text transform="translate(329.82,427) scale(0.9769,1)" font-size="14" font-weight="400" fill="#000">std.lang.all</text><text transform="translate(504.10,427) scale(0.9273,1)" font-size="14" font-weight="400" fill="#000">All Languages</text></svg>
<div class="ab" style="left:0;top:0;width:687px;height:439px;box-sizing:border-box;border:1px solid #a0a0a0"></div>
</body></html>
